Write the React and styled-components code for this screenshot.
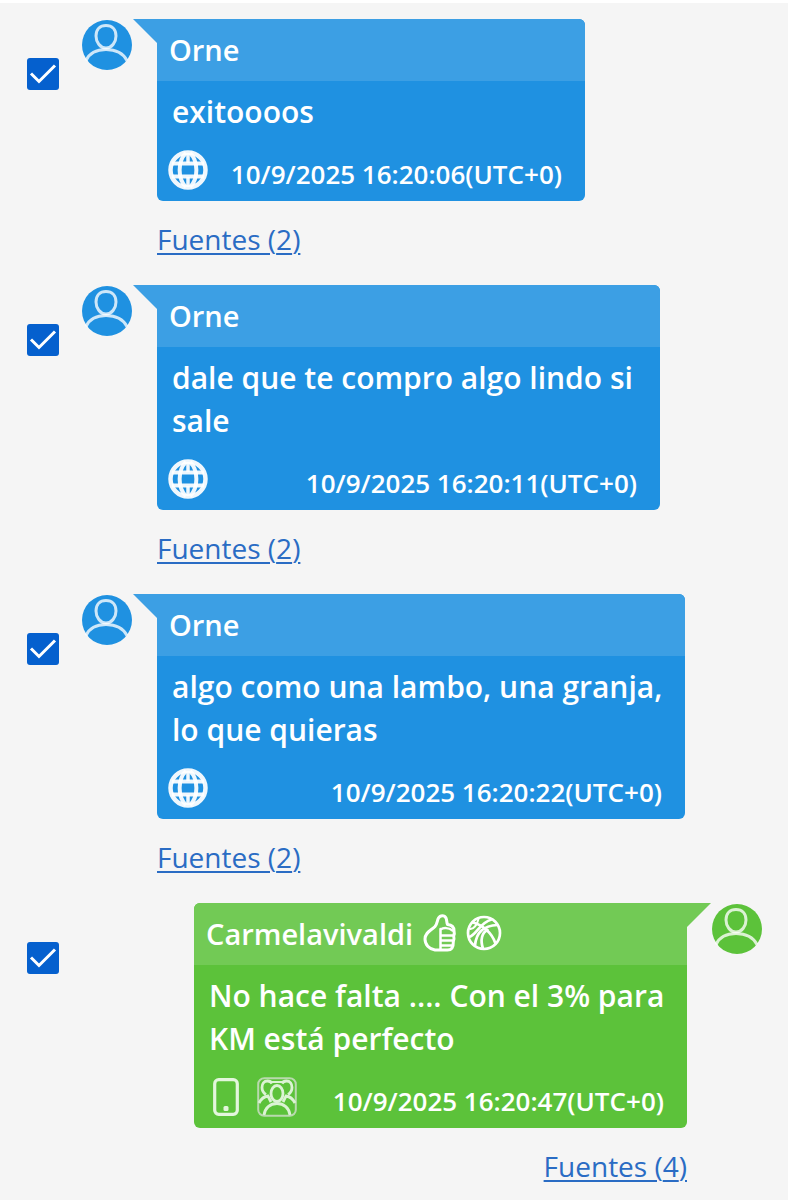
import React from "react";
import styled, { createGlobalStyle, ThemeProvider } from "styled-components";

const theme = {
  background: "#f5f5f5",
  link: "#2a6cc4",
  checkbox: "#0560ce",
  incoming: { header: "#3c9fe4", body: "#1f91e1" },
  outgoing: { header: "#72ca55", body: "#5cc23a" },
};

const messages = [
  {
    id: 1,
    side: "incoming",
    author: "Orne",
    text: "exitoooos",
    date: "10/9/2025 16:20:06(UTC+0)",
    sources: 2,
    width: 428,
  },
  {
    id: 2,
    side: "incoming",
    author: "Orne",
    text: "dale que te compro algo lindo si sale",
    date: "10/9/2025 16:20:11(UTC+0)",
    sources: 2,
    width: 503,
  },
  {
    id: 3,
    side: "incoming",
    author: "Orne",
    text: "algo como una lambo, una granja, lo que quieras",
    date: "10/9/2025 16:20:22(UTC+0)",
    sources: 2,
    width: 528,
  },
  {
    id: 4,
    side: "outgoing",
    author: "Carmelavivaldi",
    text: "No hace falta .... Con el 3% para KM está perfecto",
    date: "10/9/2025 16:20:47(UTC+0)",
    sources: 4,
    width: 493,
  },
];

const UserIcon = () => (
  <svg width="50" height="50" viewBox="0 0 50 50" aria-hidden="true">
    <circle cx="25" cy="25" r="25" fill="currentColor" />
    <g fill="none" stroke="#fff" strokeOpacity="0.78" strokeWidth="3">
      <path d="M24 5.500c6 0 10 4 10 10.500 0 6-4 12-10 12s-10-6-10-12C14 9.500 18 5.500 24 5.500z" />
      <path d="M4 40.500C7 34 14 29.500 24 29.500S41.500 34 45 40.500" />
    </g>
  </svg>
);

const GlobeIcon = () => (
  <svg width="40" height="40" viewBox="0 0 40 40" aria-hidden="true">
    <g fill="none" stroke="#fff" strokeOpacity="0.93">
      <circle cx="20" cy="20" r="17.500" strokeWidth="4.500" />
      <path d="M4 13.500h32M4 26.500h32" strokeWidth="4" />
      <path d="M20 3v10M20 27v10" strokeWidth="3.500" />
      <path d="M18 3C9.500 11 9.500 29 18 37M22 3c8.500 8 8.500 26 0 34" strokeWidth="4" />
    </g>
  </svg>
);

const PhoneIcon = () => (
  <svg width="26" height="38" viewBox="0 0 26 38" aria-hidden="true">
    <rect x="1.700" y="1.700" width="22.600" height="34.600" rx="4" fill="none" stroke="#e3f6dc" strokeWidth="3.2" />
    <rect x="10.500" y="28" width="5" height="5" rx="1.500" fill="#e3f6dc" />
  </svg>
);

const GroupIcon = () => (
  <svg width="40" height="40" viewBox="0 0 40 40" aria-hidden="true">
    <rect x="1.200" y="1.200" width="37.600" height="37.600" rx="6" fill="none" stroke="#b9d9ae" strokeWidth="2" />
    <g fill="none" stroke="#dcf3d4" strokeWidth="2.8">
      <ellipse cx="20" cy="16.500" rx="6" ry="8" />
      <path d="M7 38c1-7 6-11.500 13-11.500S32 31 33 38" />
      <path d="M15 6.500C14 4.500 12.500 4 10.500 4 7 4 5 7 5 10.500c0 3 1.500 5.500 4 7M25 6.500C26 4.500 27.500 4 29.500 4 33 4 35 7 35 10.500c0 3-1.500 5.500-4 7" />
      <path d="M2 26c2-4 5-6.500 9-7l3 6M38 26c-2-4-5-6.500-9-7l-3 6" />
      <path d="M14 5h12" strokeWidth="2" />
    </g>
  </svg>
);

const ThumbIcon = () => (
  <svg width="34" height="38" viewBox="0 0 34 38" aria-hidden="true">
    <g fill="none" stroke="#fff" strokeWidth="3" strokeLinejoin="round" strokeLinecap="round">
      <path d="M12 12.500C14.500 9.500 14 6.500 15.500 4c1.800-3 6-3 7.500 0 1 2.500.5 4 1.500 6.500 4 .5 6.500 2.500 6.500 6 .5 2 .5 3.500-.3 5.500.5 2 .5 4-.4 5.700.2 5.800-1.800 8.300-5.800 8.300H12C6 35 2 30.500 2 25c0-6.500 6-8.500 10-12.500z" />
      <path d="M17.500 15v20M17.500 15.500c3-2 8-2 12 1M18 21.500h11.500M18 26.500h11.500M18 31.500h11" strokeWidth="2.500" />
    </g>
  </svg>
);

const BallIcon = () => (
  <svg width="36" height="36" viewBox="0 0 36 36" aria-hidden="true">
    <g fill="none" stroke="#fff" strokeWidth="2.700" strokeLinecap="round">
      <circle cx="18" cy="18" r="16" />
      <path d="M3 22C11 20 13 8 25.500 4.500" />
      <path d="M9 30.500C10 19 16 10.500 31.500 10" />
      <path d="M7 7.500C17 10 26 18 29.500 28.500" />
      <path d="M17 33.500C14 25 16 17.500 21.500 15" />
      <path d="M4.500 14C8 13.500 11 10 12.500 4" strokeWidth="2" />
    </g>
  </svg>
);

const CheckIcon = () => (
  <svg width="32" height="32" viewBox="0 0 32 32" aria-hidden="true">
    <path d="M4 15.500l8 8L28 7.500" fill="none" stroke="#fff" strokeWidth="3" />
  </svg>
);

const Message = ({ message }) => {
  const outgoing = message.side === "outgoing";

  return (
    <Row>
      <CheckLabel>
        <Checkbox
          type="checkbox"
          defaultChecked
          aria-label={`${message.author} ${message.date}`}
        />
        <CheckIcon />
      </CheckLabel>
      <Content $outgoing={outgoing}>
        <Avatar $side={message.side}>
          <UserIcon />
        </Avatar>
        <Column $outgoing={outgoing} $width={message.width}>
          <Bubble $side={message.side}>
            <Header $side={message.side}>
              {message.author}
              {outgoing && (
                <Emojis>
                  <ThumbIcon />
                  <BallIcon />
                </Emojis>
              )}
            </Header>
            <Text>{message.text}</Text>
            <Footer>
              <Icons $outgoing={outgoing}>
                {outgoing ? (
                  <>
                    <PhoneIcon />
                    <GroupIcon />
                  </>
                ) : (
                  <GlobeIcon />
                )}
              </Icons>
              <Time>{message.date}</Time>
            </Footer>
          </Bubble>
          <SourcesLink href="#fuentes">Fuentes ({message.sources})</SourcesLink>
        </Column>
      </Content>
    </Row>
  );
};

const App = () => (
  <ThemeProvider theme={theme}>
    <GlobalStyle />
    <Thread>
      {messages.map(message => (
        <Message key={message.id} message={message} />
      ))}
    </Thread>
  </ThemeProvider>
);

const GlobalStyle = createGlobalStyle`
  * {
    box-sizing: border-box;
  }

  body {
    margin: 0;
    background-color: ${({ theme }) => theme.background};
    font-family: "Open Sans", "Noto Sans", sans-serif;
  }

  svg {
    display: block;
    flex: none;
  }
`;

const Thread = styled.main`
  display: flex;
  flex-direction: column;
  gap: 26px;
  padding: 16px 26px 8px 27px;

  border-top: 3px solid #fff;
`;

const Row = styled.article`
  display: flex;
  align-items: flex-start;
  gap: 23px;
`;

const CheckLabel = styled.label`
  display: grid;
  flex: none;
  margin-top: 39px;

  > * {
    grid-area: 1 / 1;
  }

  svg {
    pointer-events: none;
  }
`;

const Checkbox = styled.input`
  width: 32px;
  height: 32px;
  margin: 0;
  border-radius: 3px;

  appearance: none;
  background-color: #fff;

  &:checked {
    background-color: ${({ theme }) => theme.checkbox};
  }
`;

const Content = styled.div`
  display: flex;
  flex: 1;
  flex-direction: ${({ $outgoing }) => ($outgoing ? "row-reverse" : "row")};
  gap: 25px;
  min-width: 0;
`;

const Avatar = styled.div`
  flex: none;
  margin-top: 1px;

  color: ${({ theme, $side }) => theme[$side].body};
`;

const Column = styled.div`
  display: flex;
  flex: 0 1 ${({ $width }) => $width}px;
  flex-direction: column;
  align-items: ${({ $outgoing }) => ($outgoing ? "flex-end" : "flex-start")};
  gap: 18px;
  min-width: 0;
`;

const Bubble = styled.div`
  position: relative;
  width: 100%;
  border-radius: ${({ $side }) =>
    $side === "outgoing" ? "6px 0 6px 6px" : "0 6px 6px 6px"};

  background-color: ${({ theme, $side }) => theme[$side].body};
  color: #fff;
  font-weight: 600;

  &::before {
    position: absolute;
    top: 0;
    ${({ $side }) => ($side === "outgoing" ? "left: 100%" : "right: 100%")};
    width: 24px;
    height: 24px;
    clip-path: ${({ $side }) =>
      $side === "outgoing"
        ? "polygon(0 0, 100% 0, 0 100%)"
        : "polygon(0 0, 100% 0, 100% 100%)"};

    background-color: ${({ theme, $side }) => theme[$side].header};
    content: "";
  }
`;

const Header = styled.header`
  display: flex;
  align-items: center;
  gap: 8px;
  height: 62px;
  padding: 0 12px 2px;
  border-radius: inherit;
  border-bottom-left-radius: 0;
  border-bottom-right-radius: 0;

  background-color: ${({ theme, $side }) => theme[$side].header};
  font-size: 29px;
`;

const Emojis = styled.span`
  display: flex;
  align-items: center;
  gap: 9px;
  margin-left: 2px;
`;

const Text = styled.p`
  margin: 0;
  padding: 9px 12px 0 15px;

  font-size: 30px;
  line-height: 43px;
`;

const Footer = styled.footer`
  display: flex;
  align-items: center;
  justify-content: space-between;
  height: 68px;
  padding: 5px 23px 0 11px;
`;

const Icons = styled.div`
  display: flex;
  align-items: center;
  gap: 18px;
  padding-left: ${({ $outgoing }) => ($outgoing ? 8 : 0)}px;
`;

const Time = styled.time`
  padding-top: 8px;

  font-size: 26px;
  line-height: 36px;
  white-space: nowrap;
`;

const SourcesLink = styled.a`
  color: ${({ theme }) => theme.link};
  font-size: 28px;
  line-height: 40px;
  text-decoration-thickness: 2px;
  text-underline-offset: 3px;
`;

export default App;
